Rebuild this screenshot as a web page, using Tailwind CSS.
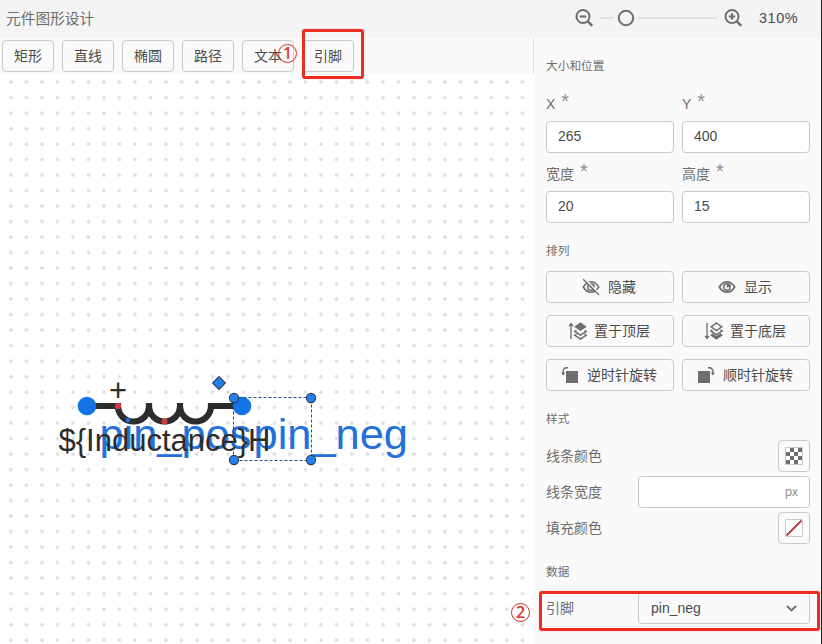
<!DOCTYPE html>
<html lang="zh-CN">
<head>
<meta charset="utf-8">
<title>元件图形设计</title>
<script src="https://cdn.jsdelivr.net/npm/@tailwindcss/browser@4"></script>
</head>
<body class="relative h-[644px] w-[822px] overflow-hidden bg-[#fafafa] font-['Liberation_Sans','Noto_Sans_CJK_SC',sans-serif] text-sm text-[#4b4b4b]">
<div class="flex h-full flex-col border-r border-[#222]">
  <header class="flex h-[38px] shrink-0 items-center bg-[#f4f4f4] pl-1.5 text-[#6e6e6e]">
    <h1 class="text-[14.7px] leading-[38px]">元件图形设计</h1>
    <div class="mr-[21px] ml-auto flex h-9 items-center">
      <svg class="size-5" viewBox="0 0 20 20" fill="none" stroke="#6e6e6e" stroke-width="2"><circle cx="9" cy="7.500" r="6.500"/><path d="M5.800 7.500h6.400" stroke-width="2.100"/><path d="M13.500 12.200l4.800 4.600" stroke-width="2.400"/></svg>
      <svg class="ml-1 h-5 w-[120px]" viewBox="0 0 120 20" fill="none"><path d="M2 9h14M40 9h79" stroke="#e1e1e1" stroke-width="2"/><circle cx="28" cy="9" r="7.200" stroke="#6e6e6e" stroke-width="2"/></svg>
      <svg class="ml-[5px] size-5" viewBox="0 0 20 20" fill="none" stroke="#6e6e6e" stroke-width="2"><circle cx="9" cy="7.500" r="6.500"/><path d="M5.800 7.500h6.400M9 4.300v6.400" stroke-width="2.100"/><path d="M13.500 12.200l4.800 4.600" stroke-width="2.400"/></svg>
      <span class="ml-4 w-[41px] -translate-y-px text-[14.5px] tracking-[0.5px] text-[#4b4b4b]">310%</span>
    </div>
  </header>
  <div class="flex min-h-0 flex-1">
    <main class="flex w-[534px] shrink-0 flex-col bg-white">
      <div class="flex h-9 shrink-0 gap-2 border-r border-[#e1e1e1] bg-[#fafafa] pt-0.5 pl-0.5">
        <button class="h-8 w-[52px] rounded border border-[#cacaca] leading-[30px]">矩形</button>
        <button class="h-8 w-[52px] rounded border border-[#cacaca] leading-[30px]">直线</button>
        <button class="h-8 w-[52px] rounded border border-[#cacaca] leading-[30px]">椭圆</button>
        <button class="h-8 w-[52px] rounded border border-[#cacaca] leading-[30px]">路径</button>
        <button class="h-8 w-[52px] rounded border border-[#cacaca] leading-[30px]">文本</button>
        <button class="h-8 w-[52px] rounded border border-[#cacaca] leading-[30px]">引脚</button>
      </div>
      <svg class="h-[570px] w-[534px]" viewBox="0 74 534 570" font-family="Liberation Sans, Arial, sans-serif">
        <defs><pattern id="dots" x="3.2" y="74.3" width="15.5" height="15.5" patternUnits="userSpaceOnUse"><circle cx="7.75" cy="7.75" r="1.8" fill="#dcdcdc"/></pattern></defs>
        <rect x="3.2" y="74" width="530" height="570" fill="url(#dots)"/>
        <path d="M87 406h31a15.5 15.5 0 0 0 31 0v-3v3a15.5 15.5 0 0 0 31 0v-3v3a15.5 15.5 0 0 0 31 0h31" fill="none" stroke="#2c2c2c" stroke-width="6.2"/>
        <circle cx="87" cy="406" r="9.3" fill="#1473e6"/><circle cx="242" cy="406" r="9.3" fill="#1473e6"/>
        <circle cx="118" cy="406" r="3.1" fill="#d7373f"/><circle cx="164.5" cy="421.5" r="3.1" fill="#d7373f"/>
        <rect x="126" y="418" width="4" height="4" fill="#1473e6"/>
        <text x="99.4" y="449" font-size="43.4" fill="#2370dc">pin_pos</text>
        <text x="253.5" y="449" font-size="43.4" fill="#2370dc">pin_neg</text>
        <text x="58.5" y="451" font-size="31" fill="#2c2c2c">${Inductance}H</text>
        <text x="109" y="401" font-size="31" fill="#2c2c2c">+</text>
        <path d="M233.5 397.5h78v63h-78z" fill="none" stroke="#1e5089" stroke-width="1" stroke-dasharray="3 2"/>
        <g fill="#2680eb" stroke="#243d5c" stroke-width="1.1"><circle cx="234" cy="398" r="4.6"/><circle cx="311" cy="398" r="4.6"/><circle cx="234" cy="460" r="4.6"/><circle cx="311" cy="460" r="4.6"/><path d="M219 376.6l6.4 6.4-6.4 6.4-6.4-6.4z"/></g>
      </svg>
    </main>
    <aside class="flex w-[276px] flex-col pl-3 text-[#6e6e6e]">
      <h2 class="mt-4 h-6 text-[11.7px] leading-6">大小和位置</h2>
      <div class="mt-[15px] grid grid-cols-2 gap-x-2">
        <label class="flex h-7 gap-1.5 leading-[22px]">X<span class="-mt-0.5 text-[20px] leading-none text-[#8e8e8e]">*</span></label>
        <label class="flex h-7 gap-1.5 leading-[22px]">Y<span class="-mt-0.5 text-[20px] leading-none text-[#8e8e8e]">*</span></label>
        <div class="h-8 rounded border border-[#cacaca] bg-white pl-[11px] leading-[29px] text-[#4b4b4b]">265</div>
        <div class="h-8 rounded border border-[#cacaca] bg-white pl-[11px] leading-[29px] text-[#4b4b4b]">400</div>
        <label class="mt-2.5 flex h-7 gap-1.5 leading-[22px]">宽度<span class="-mt-0.5 text-[20px] leading-none text-[#8e8e8e]">*</span></label>
        <label class="mt-2.5 flex h-7 gap-1.5 leading-[22px]">高度<span class="-mt-0.5 text-[20px] leading-none text-[#8e8e8e]">*</span></label>
        <div class="h-8 rounded border border-[#cacaca] bg-white pl-[11px] leading-[29px] text-[#4b4b4b]">20</div>
        <div class="h-8 rounded border border-[#cacaca] bg-white pl-[11px] leading-[29px] text-[#4b4b4b]">15</div>
      </div>
      <h2 class="mt-4 h-6 text-[11.7px] leading-6">排列</h2>
      <div class="mt-2 grid grid-cols-2 gap-x-2 gap-y-3 text-[#4b4b4b]">
        <button class="flex h-8 items-center justify-center gap-2 rounded border border-[#cacaca] pr-0.5 leading-[30px]">
          <svg class="size-[18px]" viewBox="0 0 18 18"><path d="M1.300 9C4 4.400 6.200 3.800 9 3.800s5 .6 7.700 5.200C14 13.600 11.800 14.200 9 14.200S4 13.600 1.300 9z" fill="none" stroke="#6e6e6e" stroke-width="1.600"/><circle cx="9" cy="9" r="4" fill="#6e6e6e"/><path d="M9 6.500A2.500 2.500 0 1 0 11.500 9H9z" fill="#fafafa"/><circle cx="9.300" cy="8.800" r="1.500" fill="#6e6e6e"/><path d="M2.700.9L18 16.200" stroke="#fafafa" stroke-width="1.700"/><path d="M1.200 1.200L17 17" stroke="#6e6e6e" stroke-width="1.400"/></svg>隐藏</button>
        <button class="flex h-8 items-center justify-center gap-2 rounded border border-[#cacaca] pr-0.5 leading-[30px]">
          <svg class="size-[18px]" viewBox="0 0 18 18"><path d="M1.300 9C4 4.400 6.200 3.800 9 3.800s5 .6 7.700 5.200C14 13.600 11.800 14.200 9 14.200S4 13.600 1.300 9z" fill="none" stroke="#6e6e6e" stroke-width="1.700"/><circle cx="9" cy="9" r="4" fill="#6e6e6e"/><path d="M9 6.500A2.500 2.500 0 1 0 11.500 9H9z" fill="#fafafa"/><circle cx="9.500" cy="8.500" r="1.100" fill="#6e6e6e"/></svg>显示</button>
        <button class="flex h-8 items-center justify-center gap-2 rounded border border-[#cacaca] pr-0.5 leading-[30px]">
          <svg class="h-[18px] w-[18px] translate-x-px overflow-visible" viewBox="0 0 18 18" fill="none" stroke="#6e6e6e" stroke-width="1.300"><path d="M2 17V2M0 4l2-2.500L4 4"/><path d="M11.500.3l6.300 4.400-6.300 4.300-6.300-4.300z" fill="#6e6e6e" stroke="none"/><path d="M7.500 8.300L5.800 9.500l5.700 3.700 5.700-3.700-1.700-1.200M7.500 12.100l-1.700 1.200 5.700 3.700 5.700-3.700-1.700-1.200" stroke-width="1.500"/></svg>置于顶层</button>
        <button class="flex h-8 items-center justify-center gap-2 rounded border border-[#cacaca] pr-0.5 leading-[30px]">
          <svg class="h-[18px] w-[18px] translate-x-px overflow-visible" viewBox="0 0 18 18" fill="none" stroke="#6e6e6e" stroke-width="1.300"><path d="M2 1v15M0 14l2 2.500L4 14"/><path d="M11.500 1l5.300 3.800-5.300 3.700-5.300-3.700zM7.500 7.800L5.800 9l5.700 3.700L17.200 9l-1.700-1.200" stroke-width="1.500"/><path d="M7.500 11.300l-2.300 1.900 6.300 4.600 6.300-4.600-2.300-1.900-4 2.800z" fill="#6e6e6e" stroke="none"/></svg>置于底层</button>
        <button class="flex h-8 items-center justify-center gap-2 rounded border border-[#cacaca] pr-0.5 leading-[30px]">
          <svg class="size-[18px]" viewBox="0 0 18 18" fill="#6e6e6e"><path d="M5 5h12v12H5zM0 6.500h4.400L2.200 9.500z"/><path d="M2.200 7.500V5A3.300 3.300 0 0 1 5.500 1.700H7" fill="none" stroke="#6e6e6e" stroke-width="1.400"/></svg>逆时针旋转</button>
        <button class="flex h-8 items-center justify-center gap-2 rounded border border-[#cacaca] pr-0.5 leading-[30px]">
          <svg class="size-[18px]" viewBox="0 0 18 18" fill="#6e6e6e"><path d="M1 5h12v12H1zM13.600 6.500H18l-2.200 3z"/><path d="M15.800 7.500V5a3.300 3.300 0 0 0-3.300-3.300H11" fill="none" stroke="#6e6e6e" stroke-width="1.400"/></svg>顺时针旋转</button>
      </div>
      <h2 class="mt-4 h-6 text-[11.700px] leading-6">样式</h2>
      <div class="mt-[9px] flex flex-col gap-1">
        <div class="flex h-8 items-center justify-between">线条颜色
          <div class="flex size-8 items-center justify-center rounded border border-[#cacaca]"><svg class="size-[18px]" viewBox="0 0 18 18" shape-rendering="crispEdges"><rect x=".5" y=".5" width="17" height="17" rx="1" fill="#fff" stroke="#cacaca"/><path d="M5 1h4v4H5zM13 1h4v4h-4zM1 5h4v4H1zM9 5h4v4H9zM5 9h4v4H5zM13 9h4v4h-4zM1 13h4v4H1zM9 13h4v4H9z" fill="#6e6e6e"/></svg></div>
        </div>
        <div class="flex h-8 items-center justify-between">线条宽度
          <div class="h-8 w-[172px] rounded border border-[#cacaca] bg-white pr-[11px] text-right font-['Noto_Sans_CJK_SC'] text-xs leading-[28px] text-[#8e8e8e]">px</div>
        </div>
        <div class="flex h-8 items-center justify-between">填充颜色
          <div class="flex size-8 items-center justify-center rounded border border-[#cacaca]"><svg class="size-[18px]" viewBox="0 0 18 18"><rect x=".5" y=".5" width="17" height="17" rx="1" fill="#fff" stroke="#cacaca"/><path d="M1.500 16.500l15-15" stroke="#bf3a43" stroke-width="2"/></svg></div>
        </div>
      </div>
      <h2 class="mt-4 h-6 text-[11.700px] leading-6">数据</h2>
      <div class="mt-2 flex h-8 items-center justify-between">引脚
        <div class="flex h-8 w-[172px] items-center justify-between rounded border border-[#cacaca] pr-3 pl-3 leading-[30px] text-[#4b4b4b]">pin_neg
          <svg class="h-[7px] w-[11px]" viewBox="0 0 11 7" fill="none" stroke="#6e6e6e" stroke-width="1.900"><path d="M1 1l4.500 4.500L10 1"/></svg></div>
      </div>
    </aside>
  </div>
</div>
<div class="absolute top-[29px] left-[302px] h-[50px] w-[62px] rounded-[3px] border-[3px] border-[#ea2e24] shadow-[0_0_1px_#ff7068]"></div>
<div class="absolute top-[591px] left-[539px] h-10 w-[281px] rounded-[3px] border-[3px] border-[#ea2e24] shadow-[0_0_1px_#ff7068]"></div>
<div class="absolute top-[43.500px] left-[278px] flex size-[19px] items-center justify-center rounded-full border border-[#d92d25] font-['Noto_Sans'] text-[16px] leading-none font-medium text-[#d92d25]">1</div>
<div class="absolute top-[602.500px] left-[511px] flex size-[19px] items-center justify-center rounded-full border border-[#d92d25] font-['Noto_Sans'] text-[16px] leading-none font-medium text-[#d92d25]">2</div>
</body>
</html>
